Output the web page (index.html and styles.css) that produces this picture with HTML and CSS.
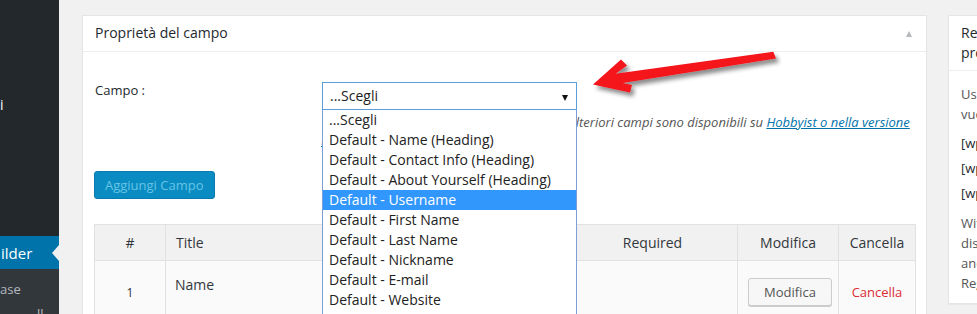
FILE: index.html
```html
<!DOCTYPE html>
<html lang="it">
<head>
<meta charset="utf-8">
<title>Profile Builder - Gestisci campi</title>
<link rel="stylesheet" href="styles.css">
</head>
<body>
<div class="wp">
  <nav class="sidebar">
    <div class="menu-item first">i</div>
    <div class="menu-item active">ilder<span class="notch"></span></div>
    <ul class="submenu">
      <li>ase</li>
      <li class="sub-2">ll</li>
    </ul>
  </nav>

  <main class="content">
    <section class="postbox main-box">
      <h2 class="hndle">Proprietà del campo <span class="toggle"></span></h2>
      <div class="inside">
        <div class="field-row">
          <label class="field-label">Campo :</label>
          <div class="field-control">
            <div class="select">
              <span>...Scegli</span>
              <span class="caret"></span>
              <ul class="dropdown">
                <li>...Scegli</li>
                <li>Default - Name (Heading)</li>
                <li>Default - Contact Info (Heading)</li>
                <li>Default - About Yourself (Heading)</li>
                <li class="selected">Default - Username</li>
                <li>Default - First Name</li>
                <li>Default - Last Name</li>
                <li>Default - Nickname</li>
                <li>Default - E-mail</li>
                <li>Default - Website</li>
                <li>Default - AIM</li>
              </ul>
            </div>
            <p class="description">Scegli uno dei campi che vuoi aggiungere. Ulteriori campi sono disponibili su <a href="#">Hobbyist o nella versione</a> <a href="#">Pro</a>.</p>
          </div>
        </div>

        <button class="button-primary">Aggiungi Campo</button>

        <table class="fields">
          <colgroup>
            <col class="c-num"><col class="c-title"><col class="c-req"><col class="c-edit"><col class="c-del">
          </colgroup>
          <thead>
            <tr><th class="center">#</th><th>Title</th><th class="center">Required</th><th class="center">Modifica</th><th class="center">Cancella</th></tr>
          </thead>
          <tbody>
            <tr>
              <td class="center num">1</td>
              <td class="title">Name</td>
              <td></td>
              <td class="center"><button class="button">Modifica</button></td>
              <td class="center"><a class="delete" href="#">Cancella</a></td>
            </tr>
          </tbody>
        </table>
      </div>
    </section>

    <aside class="postbox side-box">
      <h2 class="hndle side-title">Registrazione e modifica<br>profilo</h2>
      <div class="side-inside">
        <p>Usa questi shortcode nelle pagine in cui<br>vuoi che i moduli vengano visualizzati:</p>
        <p class="code">[wppb-register]</p>
        <p class="code">[wppb-edit-profile]</p>
        <p class="code">[wppb-register role="author"]</p>
        <p class="last">With Profile Builder Pro v2 you can<br>display different fields in the registration<br>and edit profile forms, using the Multiple<br>Registration &amp; Edit Profile Forms module.</p>
      </div>
    </aside>
  </main>
</div>

<svg class="arrow" width="210" height="70" viewBox="580 38 210 70" aria-hidden="true">
  <defs>
    <filter id="sh" x="-20%" y="-40%" width="140%" height="180%">
      <feDropShadow dx="3" dy="4" stdDeviation="2" flood-color="#000" flood-opacity="0.45"/>
    </filter>
  </defs>
  <polygon filter="url(#sh)" fill="#f5121a"
    points="593,84.5 621,59.5 627,65.5 615.5,73.7 773.3,51.7 776,58.5 622.4,83.1 632,85 630,92.5"/>
</svg>
</body>
</html>
```

FILE: styles.css
```css
html, body {
  margin: 0;
  padding: 0;
  height: 314px;
  overflow: hidden;
  background: #f1f1f1;
  font-family: "Open Sans", "Noto Sans", sans-serif;
  color: #23282d;
}

.wp {
  display: flex;
  height: 314px;
}

/* ---------- sidebar ---------- */
.sidebar {
  width: 59px;
  flex: none;
  background: #23282d;
  overflow: hidden;
  display: flex;
  flex-direction: column;
}
.menu-item {
  color: #fff;
  font-size: 14px;
  line-height: 20px;
  white-space: nowrap;
  position: relative;
}
.menu-item.first {
  margin-top: 95px;
}
.menu-item.active {
  margin-top: 121px;
  background: #0073aa;
  padding: 7px 0 6px 1px;
  font-size: 15px;
}
.notch {
  position: absolute;
  right: 0;
  top: 9px;
  width: 0;
  height: 0;
  border-style: solid;
  border-width: 8px 7px 8px 0;
  border-color: transparent #f1f1f1 transparent transparent;
}
.submenu {
  list-style: none;
  margin: 0;
  padding: 9px 0 0 0;
  background: #32373c;
  flex: 1;
}
.submenu li {
  color: #b4b9be;
  font-size: 13px;
  line-height: 22px;
  white-space: nowrap;
}
.submenu li.sub-2 {
  padding: 3px 0 0 37px;
}

/* ---------- content ---------- */
.content {
  display: flex;
  align-items: flex-start;
  gap: 21px;
  padding: 15px 0 0 23px;
  flex: none;
}
.postbox {
  background: #fff;
  border: 1px solid #e5e5e5;
  box-shadow: 0 1px 1px rgba(0,0,0,.04);
  box-sizing: border-box;
}
.main-box {
  width: 845px;
  height: 320px;
}
.hndle {
  margin: 0;
  font-size: 14px;
  font-weight: 400;
  line-height: 20px;
  padding: 7px 12px 8px;
  border-bottom: 1px solid #eee;
  position: relative;
  color: #23282d;
}
.toggle {
  position: absolute;
  right: 14px;
  top: 15px;
  width: 0;
  height: 0;
  border-style: solid;
  border-width: 0 3.5px 6px 3.5px;
  border-color: transparent transparent #b4b9be transparent;
}
.inside {
  padding: 30px 12px 0 12px;
}

.field-row {
  display: grid;
  grid-template-columns: 227px 1fr;
}
.field-label {
  font-size: 13px;
  line-height: 16px;
  color: #23282d;
}
.field-control {
  position: relative;
}
.select {
  position: relative;
  width: 255px;
  height: 28px;
  box-sizing: border-box;
  border: 1px solid #5b9dd9;
  background: #fff;
  font-size: 14px;
  line-height: 26px;
  padding-left: 7px;
  color: #222;
  z-index: 2;
}
.caret {
  position: absolute;
  right: 8px;
  top: 12px;
  width: 0;
  height: 0;
  border-style: solid;
  border-width: 6px 3.5px 0 3.5px;
  border-color: #111 transparent transparent transparent;
}
.dropdown {
  position: absolute;
  left: -1px;
  top: 27px;
  width: 255px;
  box-sizing: border-box;
  margin: 0;
  padding: 0;
  list-style: none;
  background: #fff;
  border: 1px solid #7b9fd6;
  border-top: none;
}
.dropdown li {
  height: 20px;
  line-height: 20px;
  padding-left: 6px;
  font-size: 14px;
  color: #222;
  white-space: nowrap;
}
.dropdown li.selected {
  background: #3297fd;
  color: #fff;
}
.description {
  margin: 3px 0 0 -1px;
  text-indent: 4px;
  font-size: 13px;
  line-height: 18px;
  font-style: italic;
  color: #555;
}
.description a {
  color: #0073aa;
}

.button-primary {
  display: block;
  margin: 22px 0 0 -1px;
  height: 28px;
  padding: 0 10px;
  font-family: inherit;
  font-size: 13px;
  color: #66c4e6;
  background: #0a8cc2;
  border: 1px solid #0a7ab0;
  border-radius: 3px;
}

.fields {
  margin: 25px 0 0 -1px;
  width: 821px;
  table-layout: fixed;
  border-collapse: collapse;
  border: 1px solid #e1e1e1;
  font-size: 14px;
}
.c-num { width: 71px; }
.c-title { width: 402px; }
.c-req { width: 170px; }
.c-edit { width: 101px; }
.c-del { width: 77px; }
.fields thead tr {
  height: 36px;
}
.fields tbody tr {
  height: 62px;
}
.fields th {
  background: #f1f1f1;
  font-weight: 400;
  text-align: left;
  padding: 0 10px;
  border: 1px solid #e1e1e1;
  color: #32373c;
}
.fields td {
  background: #fafafa;
  padding: 0 10px;
  border: 1px solid #e1e1e1;
  vertical-align: middle;
  color: #32373c;
}
.fields .center {
  text-align: center;
}
.fields td.num {
  font-size: 12px;
  padding-top: 2px;
}
.fields td.title {
  vertical-align: top;
  padding-top: 14px;
  padding-left: 9px;
}
.button {
  height: 28px;
  width: 84px;
  font-family: inherit;
  font-size: 13px;
  color: #555;
  background: #f7f7f7;
  border: 1px solid #ccc;
  border-radius: 3px;
  box-shadow: 0 1px 0 #ccc;
}
.delete {
  color: #dc2b36;
  font-size: 13px;
  text-decoration: none;
}

/* ---------- side box ---------- */
.side-box {
  width: 280px;
  flex: none;
  height: 289px;
}
.side-title {
  padding: 7px 12px 7px;
  white-space: nowrap;
}
.side-inside {
  padding: 0 12px;
  font-size: 13px;
  white-space: nowrap;
}
.side-inside p {
  margin: 0;
  line-height: 20px;
  color: #555;
}
.side-inside p:first-child {
  margin-top: 13px;
}
.side-inside p.code {
  color: #23282d;
  margin-top: 5px;
}
.side-inside p.code:nth-child(2) {
  margin-top: 9px;
}
.side-inside p.last {
  margin-top: 10px;
}

/* ---------- annotation arrow ---------- */
.arrow {
  position: absolute;
  left: 580px;
  top: 38px;
  pointer-events: none;
}
```
